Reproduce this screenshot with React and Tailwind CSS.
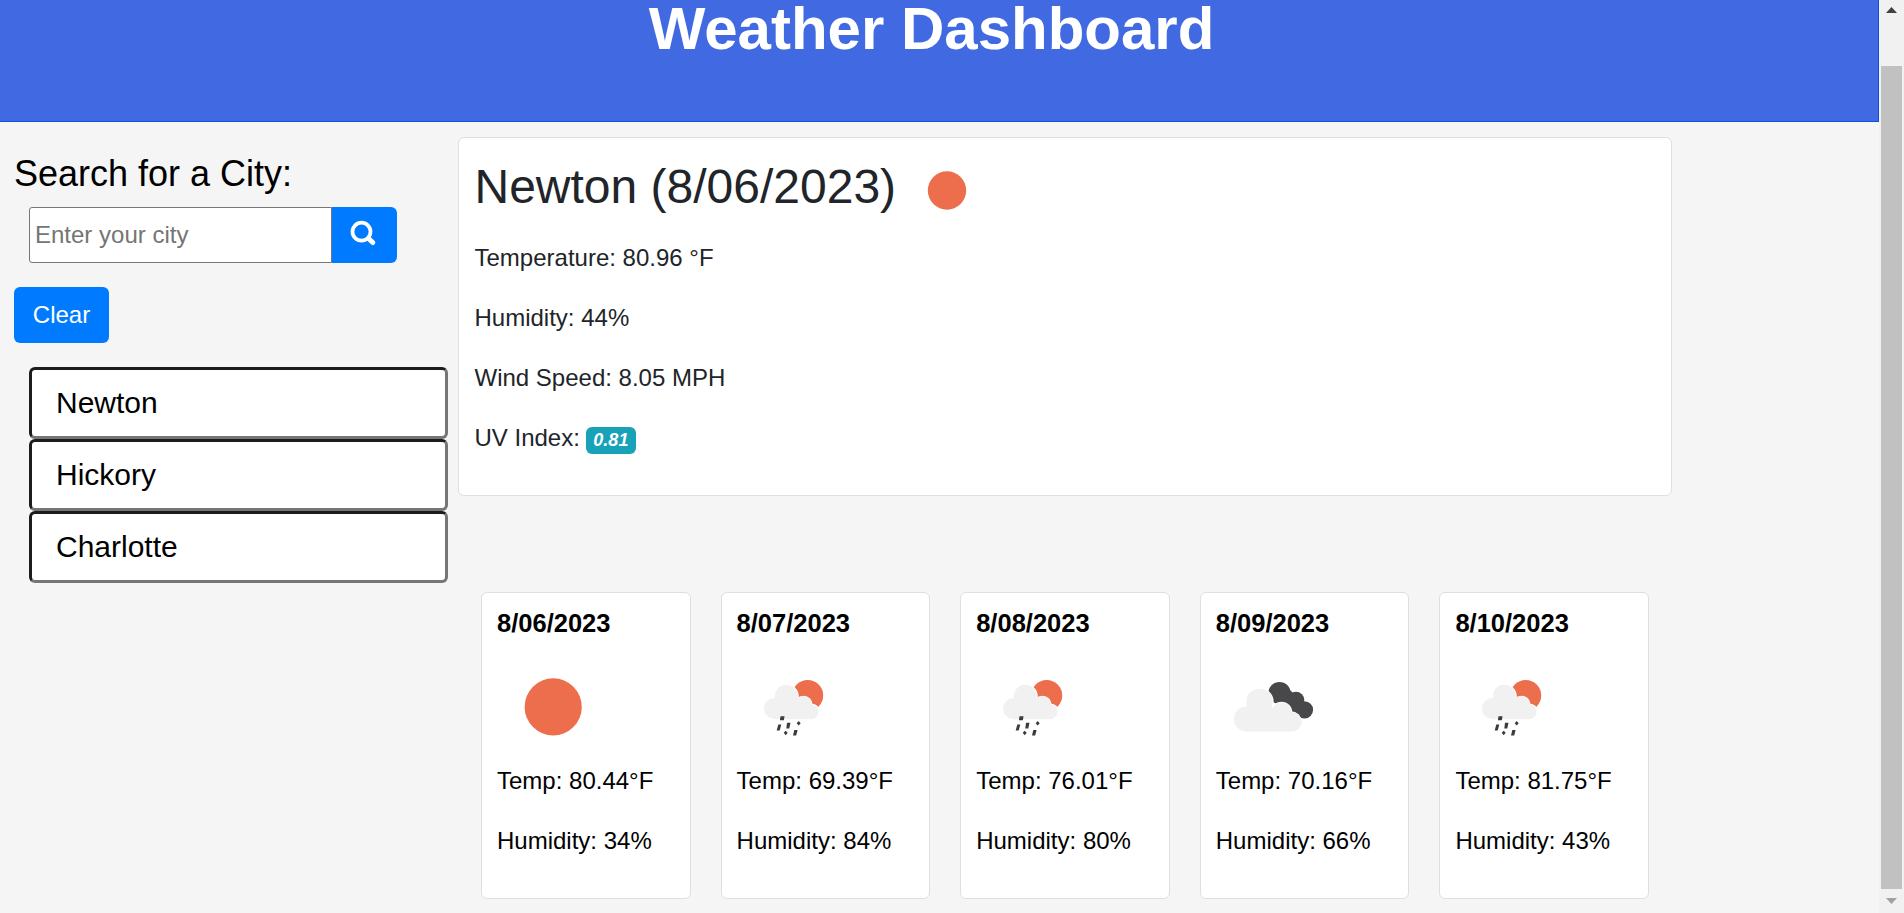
import React from 'react';

const days = [
  { date: '8/06/2023', icon: 'sun', temp: '80.44', hum: '34' },
  { date: '8/07/2023', icon: 'rain', temp: '69.39', hum: '84' },
  { date: '8/08/2023', icon: 'rain', temp: '76.01', hum: '80' },
  { date: '8/09/2023', icon: 'clouds', temp: '70.16', hum: '66' },
  { date: '8/10/2023', icon: 'rain', temp: '81.75', hum: '43' },
];

const cities = ['Newton', 'Hickory', 'Charlotte'];

function WeatherIcon({ kind }) {
  return (
    <svg className="block h-[75px] w-[110px]" viewBox="0 0 110 75">
      {kind === 'sun' && <circle cx="56.2" cy="36.9" r="28.6" fill="#ec6e4c" />}
      {kind === 'rain' && (
        <>
          <circle cx="70.7" cy="25.500" r="15.500" fill="#ec6e4c" />
          <g fill="#fff">
            <circle cx="49.700" cy="26.300" r="12" />
            <circle cx="66.500" cy="35" r="9.200" />
            <circle cx="74.500" cy="42" r="8.600" />
          </g>
          <g fill="#f1f1f1">
            <circle cx="49.300" cy="26" r="11.300" />
            <circle cx="37.400" cy="38.500" r="10.500" />
            <circle cx="65.800" cy="35" r="9" />
            <circle cx="74" cy="41.800" r="7.500" />
            <path d="M37.400 28H68L74 49.300H37.400z" />
          </g>
          <path
            d="M43.500 46.200h4l-.6 4h-4zM41.300 54.500h3l-1.600 6h-3zM50 52.800h3.500l-1.200 5.800h-3zM61.700 51l2 2.300-2 2.300-2-2.300zM48.700 60.800l2 2-2 2.400-2-2.400zM57.300 60h3.300l-1.400 5.400h-3.200z"
            fill="#3c3c3e"
          />
        </>
      )}
      {kind === 'clouds' && (
        <>
          <g fill="#48484a">
            <circle cx="63.500" cy="22.900" r="11" />
            <circle cx="80" cy="30" r="8.300" />
            <circle cx="88.500" cy="39.800" r="8.600" />
            <path d="M56 28L72 18L92 38L82 46z" />
          </g>
          <g fill="#fff">
            <circle cx="43.500" cy="32" r="14.200" />
            <circle cx="65.500" cy="42.500" r="10.800" />
            <circle cx="75" cy="51.700" r="10.400" />
          </g>
          <g fill="#f1f1f1">
            <circle cx="43.500" cy="31.900" r="13.200" />
            <circle cx="30.300" cy="49" r="12.400" />
            <circle cx="65.500" cy="42.500" r="10" />
            <circle cx="76" cy="51.700" r="9.700" />
            <path d="M30.300 38H66L76 61.400H30.300z" />
          </g>
        </>
      )}
    </svg>
  );
}

export default function App() {
  return (
    <div className="flex h-[913px] w-[1904px] overflow-hidden bg-[#f5f5f5] font-['Liberation_Sans',Arial,sans-serif] text-2xl text-black">
      <div className="flex w-[1879px] flex-col">
        <header className="flex h-[122px] justify-center border-r border-b border-[#0a53dc] bg-[#4169e1] pr-[15px]">
          <h1 className="h-[58px] text-[60px] leading-[58px] font-bold text-white">Weather Dashboard</h1>
        </header>
        <div className="flex">
          <aside className="w-[458px] pt-[30px] pl-[14px]">
            <h3 className="text-4xl leading-[43px]">Search for a City:</h3>
            <div className="mt-[12px] ml-[15px] flex h-[56px]">
              <input
                className="w-[303px] rounded-l-[3px] border border-[#767676] bg-white px-[5px] placeholder:text-[#757575]"
                placeholder="Enter your city"
              />
              <button className="flex w-[65px] justify-center rounded-r-md bg-[#007bff] pt-[13px]">
                <svg className="h-[26px] w-[26px] overflow-visible" viewBox="0 0 26 26" fill="none" stroke="#fff">
                  <circle cx="9.500" cy="11.700" r="9" strokeWidth="3.700" />
                  <path d="M16.500 18.500L20.800 22.500" strokeWidth="5" strokeLinecap="round" />
                </svg>
              </button>
            </div>
            <button className="mt-[24px] h-[56px] w-[95px] rounded-md bg-[#007bff] text-white">Clear</button>
            <ul className="mt-[24px] ml-[15px] w-[419px]">
              {cities.map((c) => (
                <li
                  key={c}
                  className="flex h-[72px] items-center rounded-md border-[3px] border-t-[#1c1c1c] border-r-[#767676] border-b-[#767676] border-l-[#1c1c1c] bg-white pl-[24px] text-3xl"
                >
                  {c}
                </li>
              ))}
            </ul>
          </aside>
          <main className="flex w-[1214px] flex-col pt-[15px]">
            <section className="h-[359px] rounded-md border border-[#dfdfdf] bg-white pt-[20px] pl-[15.500px] text-[#212529]">
              <h2 className="flex text-5xl leading-[58px]">
                Newton (8/06/2023)
                <svg className="mt-[12px] ml-[31px] h-[40px] w-[40px]" viewBox="0 0 40 40">
                  <circle cx="20" cy="20.500" r="19.200" fill="#ec6e4c" />
                </svg>
              </h2>
              <p className="mt-[24px] leading-9">Temperature: 80.96 °F</p>
              <p className="mt-6 leading-9">Humidity: 44%</p>
              <p className="mt-6 leading-9">Wind Speed: 8.05 MPH</p>
              <p className="mt-6 flex leading-9">
                UV Index:
                <span className="mt-[7px] ml-[6px] flex h-[27px] w-[50px] items-center justify-center rounded-md bg-[#17a2b8] pb-px text-lg leading-none font-bold text-white italic">
                  0.81
                </span>
              </p>
            </section>
            <section className="mt-[96px] flex gap-[30px] pl-[23px]">
              {days.map((d) => (
                <article key={d.date} className="h-[307px] w-[209.600px] shrink-0 rounded-md border border-[#dfdfdf] bg-white pt-[15px] pl-[15px]">
                  <h5 className="text-[25.500px] leading-[30px] font-bold">{d.date}</h5>
                  <div className="mt-[32px]">
                    <WeatherIcon kind={d.icon} />
                  </div>
                  <p className="mt-[18px] leading-9">Temp: {d.temp}°F</p>
                  <p className="mt-6 leading-9">Humidity: {d.hum}%</p>
                </article>
              ))}
            </section>
          </main>
        </div>
      </div>
      <div className="flex w-[25px] flex-col items-center bg-[#f1f1f1]">
        <svg className="mt-[7px] h-[6px] w-[11px]" viewBox="0 0 11 6">
          <path d="M5.500 0L11 6H0z" fill="#404040" />
        </svg>
        <div className="mt-[53px] h-[823px] w-[21px] bg-[#c1c1c1]" />
        <svg className="mt-[9px] h-[6px] w-[11px]" viewBox="0 0 11 6">
          <path d="M0 0H11L5.500 6z" fill="#a0a0a0" />
        </svg>
      </div>
    </div>
  );
}
